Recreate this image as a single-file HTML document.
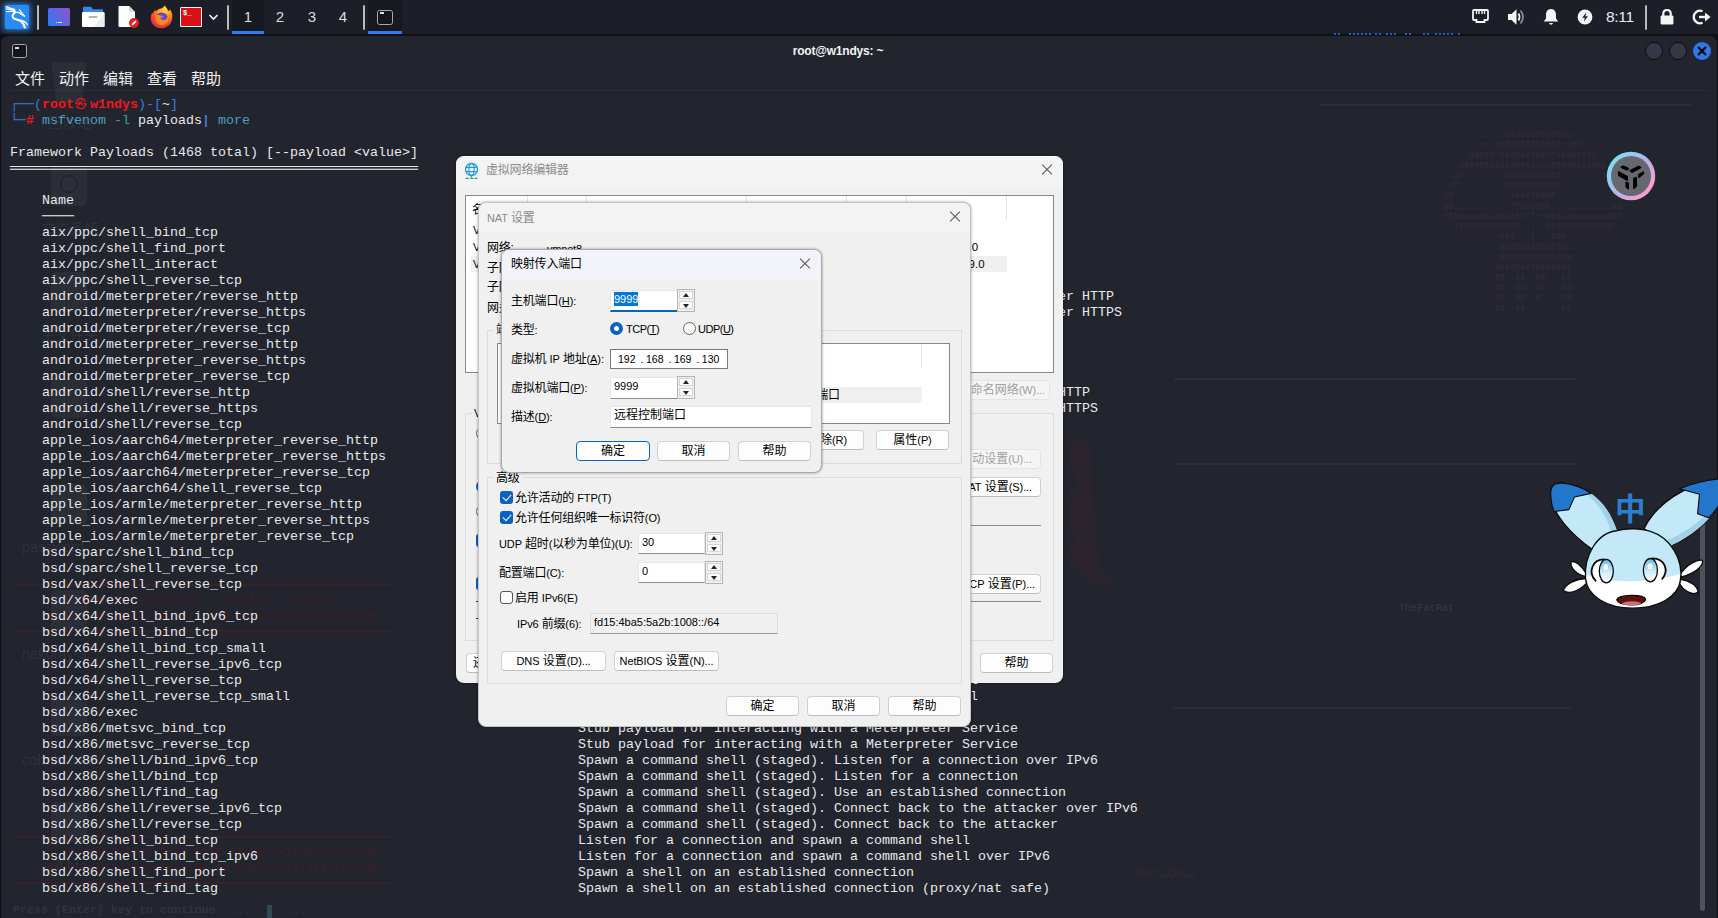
<!DOCTYPE html>
<html lang="zh-CN">
<head>
<meta charset="utf-8">
<title>root@w1ndys: ~</title>
<style>
*{box-sizing:border-box;margin:0;padding:0}
html,body{width:1718px;height:918px;overflow:hidden;background:#0f1014}
body{position:relative;font-family:"Liberation Sans","Noto Sans CJK SC",sans-serif;color:#e6e6e6}
.abs{position:absolute}
/* ---------- top panel ---------- */
#panel{position:absolute;left:0;top:0;width:1718px;height:34px;background:#1d1f28}
#panel .ws{position:absolute;top:0;height:34px;width:32px;text-align:center;font-size:15px;line-height:33px;color:#dcdcdc}
/* ---------- terminal ---------- */
#term{position:absolute;left:1px;top:36px;width:1716px;height:882px;background:#22242e;border-radius:7px 7px 0 0;overflow:hidden}
#ttitle{position:absolute;left:0;top:0;width:100%;height:30px}
#ttitle .t{position:absolute;left:0;width:1674px;top:0;text-align:center;font-size:12px;font-weight:bold;letter-spacing:-.2px;line-height:31px;color:#f4f4f4}
#menu{position:absolute;left:0;top:30px;width:100%;height:26px;font-size:15px;line-height:26px;color:#f2f2f2}
#menu span{position:absolute;top:0}
#out{position:absolute;left:9px;top:61px;font-family:"Liberation Mono","DejaVu Sans Mono",monospace;font-size:13.333px;line-height:16px;color:#e9e9ea;white-space:pre}
#out2{position:absolute;left:577px;top:61px;font-family:"Liberation Mono","DejaVu Sans Mono",monospace;font-size:13.333px;line-height:16px;color:#e9e9ea;white-space:pre}
.k{position:relative;top:-2px;display:inline-block;width:16px;text-align:center;text-indent:-3px;font-size:11.5px;font-weight:normal;font-family:"Noto Sans CJK SC",sans-serif;vertical-align:top}
.b{color:#3b7cde}.r{color:#f2161c;font-weight:bold}.c{color:#4c9fc4}
#art{position:absolute;left:0;top:0;width:100%;height:100%}
#art .ic{position:absolute;left:50px;width:36px;height:40px;border-radius:5px;background:rgba(255,255,255,.045)}
#art .ic i{position:absolute;left:9px;top:9px;width:18px;height:18px;border-radius:50%;border:1.5px solid rgba(0,0,0,.35)}
#art .il{position:absolute;left:21px;font-size:14.5px;line-height:16px;color:rgba(255,255,255,.075);white-space:nowrap}
#art .rl{position:absolute;height:2px;background:#37222a}
#art .rt{position:absolute;font-family:"Liberation Mono",monospace;font-weight:bold;font-size:11.667px;line-height:16px;color:#33222a;white-space:pre}
#art .sk{position:absolute;font-family:"Liberation Mono",monospace;font-weight:bold;font-size:8.5px;line-height:10.2px;color:#322935;white-space:pre}
/* ---------- win dialogs ---------- */
.dlg{position:absolute;background:#f0f0f0;border-radius:8px;color:#000;font-size:12px;overflow:hidden;box-shadow:0 0 3px rgba(0,0,0,.4)}
.dlg .tb{position:absolute;left:0;top:0;width:100%;background:#f3f3f3}
.btn{position:absolute;background:#fdfdfd;border:1px solid #d0d0d0;border-bottom-color:#bdbdbd;border-radius:4px;text-align:center;font-size:12px;color:#000;height:20px;line-height:18px;white-space:nowrap;overflow:hidden}
.lbl{position:absolute;white-space:nowrap;font-size:12px;line-height:14px;color:#000;letter-spacing:-.2px}
.l{font-size:11px;letter-spacing:-.1px}
.grp{position:absolute;border:1px solid #dcdcdc}
.inp{position:absolute;background:#fff;border:1px solid #e6e6e6;border-bottom:1px solid #8a8a8a;font-size:11px;line-height:16px;padding-left:3px;color:#000;white-space:nowrap}
.dt{font-weight:normal;margin:0 2.5px 0 5px}
.spin{position:absolute;width:18px;border:1px solid #b5b5b5;background:#f0f0f0}
.spin i{position:absolute;left:1px;width:14px;height:8px;background:#fdfdfd;border:1px solid #d5d5d5}
.spin i:before{content:"";position:absolute;left:3px;top:1px;border:3px solid transparent}
.spin i.u:before{border-bottom:4px solid #222;top:-2px}
.spin i.d:before{border-top:4px solid #222;top:2px}
.x{position:absolute;width:10px;height:10px}
.x:before,.x:after{content:"";position:absolute;left:-2px;top:4.5px;width:14px;height:1px;background:#555;transform:rotate(45deg)}
.x:after{transform:rotate(-45deg)}
.cb{position:absolute;width:13px;height:13px;border-radius:3px;background:#0a62c4}
.cb.off{background:#fdfdfd;border:1px solid #555}
.cb.on:after{content:"";position:absolute;left:3px;top:3px;width:7px;height:4px;border-left:1.4px solid #fff;border-bottom:1.4px solid #fff;transform:rotate(-47deg)}
.rd{position:absolute;width:13px;height:13px;border-radius:50%;border:1px solid #666;background:#fafafa}
.rd.on{border:4px solid #0a62c4;background:#fff}
</style>
</head>
<body>
<div id="panel">
  <!-- kali menu -->
  <div class="abs" style="left:5px;top:5px;width:24px;height:24px;background:#2a8af6;border-radius:2px;box-shadow:0 0 5px 2px rgba(42,138,246,.75)"></div>
  <svg class="abs" style="left:5px;top:5px" width="24" height="24" viewBox="0 0 24 24" fill="none" stroke="#fff" stroke-linecap="round" stroke-linejoin="round">
    <path d="M1 1.6 L9 4.6 M1.2 3.8 L9 5.4 M1.6 6.6 L9.2 6" stroke-width="1.3"/>
    <path d="M8.8 4.4 C10.4 6 9.6 7.6 8.4 9.2 C6.4 12 8.4 14 12 14.6 C16 15.2 18.6 17.4 19.8 22.6" stroke-width="2.1"/>
    <path d="M8.6 8.6 C10.6 6.8 13.6 7 16 8.8 L19.6 11.2" stroke-width="1.5"/>
    <path d="M14.4 4.6 L19 10.6" stroke-width="1.1"/>
    <path d="M14.5 15.2 C18 15.6 21 17 22.4 19.8" stroke-width="1.2"/>
  </svg>
  <div class="abs" style="left:37px;top:5px;width:2px;height:25px;background:#b9b9b9;border-radius:1px"></div>
  <!-- desktop -->
  <div class="abs" style="left:48px;top:8px;width:22px;height:17.5px;border-radius:1.5px;background:linear-gradient(50deg,#3578ee 15%,#6a62dc 60%,#9852cc 100%)"></div>
  <div class="abs" style="left:56px;top:21.5px;width:6px;height:1.6px;background:repeating-linear-gradient(90deg,#e8e8ff 0 1.5px,transparent 1.5px 2.2px)"></div>
  <!-- folder -->
  <svg class="abs" style="left:82px;top:6px" width="23" height="22" viewBox="0 0 23 22">
    <path d="M1 1.5 Q1 .8 1.8 .8 H9 L11 3.2 H20 Q21 3.2 21 4.2 V8 H1Z" fill="#3b82ec"/>
    <rect x="0" y="6" width="22.5" height="15" rx="1" fill="#fdfdfd"/>
    <path d="M22.5 7 V20 Q22.5 21 21.5 21 H12Z" fill="#ededed"/>
    <rect x="6.5" y="10" width="9" height="2" rx="1" fill="#b5b5b5"/>
  </svg>
  <!-- document -->
  <svg class="abs" style="left:117px;top:5px" width="24" height="24" viewBox="0 0 24 24">
    <path d="M1.5 1 H12 L18 7 V21 Q18 22 17 22 H2.5 Q1.5 22 1.5 21Z" fill="#fdfdfd"/>
    <path d="M12 1 L18 7 H13 Q12 7 12 6Z" fill="#d9d9d9"/>
    <circle cx="17" cy="18" r="5" fill="#e02326"/>
    <path d="M14.6 20.4 L15 18.8 L18.3 15.5 L19.5 16.7 L16.2 20Z" fill="#fff"/>
  </svg>
  <!-- firefox -->
  <svg class="abs" style="left:149px;top:5px" width="25" height="25" viewBox="0 0 25 25">
    <defs>
      <radialGradient id="ffo" cx="65%" cy="15%" r="95%"><stop offset="0" stop-color="#ffde3a"/><stop offset=".35" stop-color="#ff9a1f"/><stop offset=".7" stop-color="#f8432e"/><stop offset="1" stop-color="#d6205f"/></radialGradient>
      <radialGradient id="ffb" cx="50%" cy="40%" r="60%"><stop offset="0" stop-color="#8a5cf0"/><stop offset="1" stop-color="#4a2bb0"/></radialGradient>
    </defs>
    <path d="M12.5 3.5 C14 2.5 15 1.8 15.6 .6 C17.5 2.6 18.6 4.4 19.2 6 C20.4 5.6 20.8 4.8 21 4.2 C23 7 23.6 10 23.3 13 C22.7 19 18 23.3 12.3 23.3 C6.2 23.3 1.7 18.6 1.7 13 C1.7 10.4 2.4 8.6 3.4 7.2 C3.5 8 3.7 8.6 4.1 9.2 C4.3 7.6 5 6 6.4 4.8 C6.3 5.6 6.5 6.2 6.8 6.6 C8 4.8 10 3.8 12.5 3.5Z" fill="url(#ffo)"/>
    <circle cx="12.6" cy="13.6" r="6" fill="url(#ffb)"/>
    <path d="M6.8 10.2 C8.4 9.4 10.2 9.6 11.2 10.8 C12.4 10.6 13.4 11 13.6 11.6 C13 12.4 11.8 12.8 11 12.8 C11.4 14 12.6 15.4 14.8 15.2 C17.2 15 18.4 13 18.2 10.8 C19.8 13 19.6 16.4 17.4 18.4 C14.6 21 10 20.6 7.6 17.8 C5.8 15.6 5.6 12.4 6.8 10.2Z" fill="#ff8a1c"/>
  </svg>
  <!-- red terminal -->
  <div class="abs" style="left:180px;top:7px;width:22px;height:20px;background:#d81117;border:1px solid #f7f7f7;border-radius:1px"></div>
  <div class="abs" style="left:183px;top:9px;font:bold 7px/8px 'Liberation Mono',monospace;color:#fff">$_</div>
  <svg class="abs" style="left:208px;top:13px" width="11" height="8" viewBox="0 0 11 8"><path d="M1.5 2 L5.5 6 L9.5 2" fill="none" stroke="#f2f2f2" stroke-width="1.6"/></svg>
  <div class="abs" style="left:227px;top:5px;width:2px;height:25px;background:#b9b9b9;border-radius:1px"></div>
  <!-- workspaces -->
  <div class="abs" style="left:232px;top:0;width:32px;height:34px;background:#171920"></div>
  <div class="abs" style="left:232px;top:31px;width:32px;height:2.5px;background:#2d7bf0"></div>
  <div class="ws" style="left:232px">1</div><div class="ws" style="left:264px">2</div><div class="ws" style="left:296px">3</div><div class="ws" style="left:327px">4</div>
  <div class="abs" style="left:363px;top:5px;width:2px;height:25px;background:#b9b9b9;border-radius:1px"></div>
  <div class="abs" style="left:368px;top:0;width:34px;height:34px;background:#171920"></div>
  <div class="abs" style="left:368px;top:31px;width:34px;height:2.5px;background:#2d7bf0"></div>
  <div class="abs" style="left:377px;top:9.5px;width:16px;height:15px;background:#15161a;border:1.5px solid #a9a9a9;border-radius:2.5px"></div>
  <div class="abs" style="left:380px;top:12px;width:4px;height:2px;background:#ddd"></div>
<div class="abs" style="left:1334px;top:32.5px;width:2px;height:2px;border-radius:1px;background:#2d7bf0"></div><div class="abs" style="left:1338px;top:32.5px;width:2px;height:2px;border-radius:1px;background:#2d7bf0"></div><div class="abs" style="left:1349px;top:32.5px;width:2px;height:2px;border-radius:1px;background:#2d7bf0"></div><div class="abs" style="left:1353px;top:32.5px;width:2px;height:2px;border-radius:1px;background:#2d7bf0"></div><div class="abs" style="left:1357px;top:32.5px;width:2px;height:2px;border-radius:1px;background:#2d7bf0"></div><div class="abs" style="left:1361px;top:32.5px;width:2px;height:2px;border-radius:1px;background:#2d7bf0"></div><div class="abs" style="left:1365px;top:32.5px;width:2px;height:2px;border-radius:1px;background:#2d7bf0"></div><div class="abs" style="left:1369px;top:32.5px;width:2px;height:2px;border-radius:1px;background:#2d7bf0"></div><div class="abs" style="left:1375px;top:32.5px;width:2px;height:2px;border-radius:1px;background:#2d7bf0"></div><div class="abs" style="left:1379px;top:32.5px;width:2px;height:2px;border-radius:1px;background:#2d7bf0"></div><div class="abs" style="left:1386px;top:32.5px;width:2px;height:2px;border-radius:1px;background:#2d7bf0"></div><div class="abs" style="left:1390px;top:32.5px;width:2px;height:2px;border-radius:1px;background:#2d7bf0"></div><div class="abs" style="left:1394px;top:32.5px;width:2px;height:2px;border-radius:1px;background:#2d7bf0"></div><div class="abs" style="left:1405px;top:32.5px;width:2px;height:2px;border-radius:1px;background:#2d7bf0"></div><div class="abs" style="left:1409px;top:32.5px;width:2px;height:2px;border-radius:1px;background:#2d7bf0"></div><div class="abs" style="left:1423px;top:32.5px;width:2px;height:2px;border-radius:1px;background:#2d7bf0"></div><div class="abs" style="left:1427px;top:32.5px;width:2px;height:2px;border-radius:1px;background:#2d7bf0"></div><div class="abs" style="left:1435px;top:32.5px;width:2px;height:2px;border-radius:1px;background:#2d7bf0"></div><div class="abs" style="left:1439px;top:32.5px;width:2px;height:2px;border-radius:1px;background:#2d7bf0"></div><div class="abs" style="left:1443px;top:32.5px;width:2px;height:2px;border-radius:1px;background:#2d7bf0"></div><div class="abs" style="left:1447px;top:32.5px;width:2px;height:2px;border-radius:1px;background:#2d7bf0"></div><div class="abs" style="left:1451px;top:32.5px;width:2px;height:2px;border-radius:1px;background:#2d7bf0"></div><div class="abs" style="left:1458px;top:32.5px;width:2px;height:2px;border-radius:1px;background:#2d7bf0"></div>
  <!-- tray -->
  <svg class="abs" style="left:1472px;top:9px" width="17" height="15" viewBox="0 0 17 15">
    <path d="M2 1 H15 Q16 1 16 2 V10 Q16 11 15 11 H12.5 V13 H4.5 V11 H2 Q1 11 1 10 V2 Q1 1 2 1Z" fill="none" stroke="#f2f2f2" stroke-width="1.8"/>
    <path d="M4.5 2 V5 M7 2 V5 M10 2 V5 M12.5 2 V5" stroke="#f2f2f2" stroke-width="1.4"/>
  </svg>
  <svg class="abs" style="left:1507px;top:8px" width="19" height="18" viewBox="0 0 19 18">
    <path d="M1 6 H4.5 L9.5 1.2 V16.8 L4.5 12 H1Z" fill="#f5f5f5"/>
    <path d="M11.5 5.5 Q13.6 9 11.5 12.5" fill="none" stroke="#f5f5f5" stroke-width="1.7"/>
    <path d="M13.5 2.5 Q18.5 9 13.5 15.5" fill="none" stroke="#8c8c92" stroke-width="1.7"/>
  </svg>
  <svg class="abs" style="left:1542px;top:8px" width="18" height="18" viewBox="0 0 18 18">
    <path d="M9 1 C5.4 1 4 4 4 7 V10.5 L1.8 13.5 H16.2 L14 10.5 V7 C14 4 12.6 1 9 1Z" fill="#f5f5f5"/>
    <path d="M7 15 H11 Q10.6 16.8 9 16.8 Q7.4 16.8 7 15Z" fill="#f5f5f5"/>
  </svg>
  <svg class="abs" style="left:1577px;top:9px" width="16" height="16" viewBox="0 0 16 16">
    <circle cx="8" cy="8" r="7.4" fill="#f5f5f5"/>
    <path d="M9.4 3.2 L5.2 8.8 H7.8 L6.8 12.8 L10.9 7.2 H8.3Z" fill="#1d1f28"/>
  </svg>
  <div class="abs" style="left:1606px;top:0;font-size:15.5px;line-height:34px;color:#ececec;letter-spacing:-.3px">8:11</div>
  <div class="abs" style="left:1645px;top:5px;width:2px;height:25px;background:#b9b9b9;border-radius:1px"></div>
  <svg class="abs" style="left:1659px;top:8px" width="16" height="18" viewBox="0 0 16 18">
    <path d="M4.3 8 V5.6 Q4.3 2 8 2 Q11.7 2 11.7 5.6 V8" fill="none" stroke="#f5f5f5" stroke-width="2.2"/>
    <rect x="1.6" y="7.6" width="12.8" height="9" rx="1" fill="#f5f5f5"/>
  </svg>
  <svg class="abs" style="left:1692px;top:8px" width="20" height="18" viewBox="0 0 20 18">
    <path d="M10.5 3.2 A6.3 6.3 0 1 0 10.5 14.8" fill="none" stroke="#f5f5f5" stroke-width="2.3"/>
    <path d="M7 9 H15" stroke="#f5f5f5" stroke-width="2.4"/>
    <path d="M13 4.6 L18.6 9 L13 13.4Z" fill="#f5f5f5"/>
  </svg>
</div>
<div id="term">
  <div id="ttitle"><div class="t">root@w1ndys: ~</div>
    <div class="abs" style="left:11px;top:8px;width:15px;height:14px;background:#15161a;border:1.5px solid #a9a9a9;border-radius:2.5px"></div>
    <div class="abs" style="left:14px;top:11px;width:4px;height:2px;background:#ddd"></div>
    <div class="abs" style="left:1644px;top:6px;width:18px;height:18px;border-radius:50%;background:#353846;border:1px solid #0b0c10"></div>
    <div class="abs" style="left:1668px;top:6px;width:18px;height:18px;border-radius:50%;background:#353846;border:1px solid #0b0c10"></div>
    <div class="abs" style="left:1692px;top:6px;width:18px;height:18px;border-radius:50%;background:#2f78ea"></div>
    <svg class="abs" style="left:1692px;top:6px" width="18" height="18" viewBox="0 0 18 18"><path d="M5.6 5.6 L12.4 12.4 M12.4 5.6 L5.6 12.4" stroke="#0d0f14" stroke-width="2.2" stroke-linecap="round"/></svg>
  </div>
  <div id="menu"><span style="left:14px">文件</span><span style="left:58px">动作</span><span style="left:102px">编辑</span><span style="left:146px">查看</span><span style="left:190px">帮助</span></div>
  <div id="art">
    <div class="abs" style="left:8px;top:54px;width:1700px;height:1px;background:#2a2c36"></div>
    <!-- faint desktop icons seen through the translucent terminal -->
    <div class="ic" style="top:26px;height:40px;border-radius:3px;clip-path:polygon(0 0,100% 0,86% 100%,14% 100%)"></div><div class="il" style="top:79px;left:47px">回收站</div>
    <div class="ic" style="top:130px"><i></i></div><div class="il" style="top:185px;left:40px">文件系统</div>
    <div class="ic" style="top:236px"></div><div class="il" style="top:291px;left:40px">主文件夹</div>
    <div class="ic" style="top:342px"></div>
    <div class="ic" style="top:448px"></div><div class="il" style="top:503px">password</div>
    <div class="ic" style="top:554px"></div><div class="il" style="top:610px">nekoray-3...</div>
    <div class="ic" style="top:660px"></div><div class="il" style="top:716px">cobaltstrike</div>
    <div class="ic" style="top:766px"></div><div class="il" style="top:822px;left:40px">evil.hta</div>
    <!-- faint wallpaper banner -->
    <div class="rl" style="left:13px;top:548px;width:378px"></div>
    <div class="rt" style="left:65px;top:556px">! WARNING ! WARNING ! WARNING ! WARNING !</div>
    <div class="rt" style="left:39px;top:572px">YOU CAN UPLOAD THIS FILE TO WWW.NODISTRIBUTE.COM</div>
    <div class="rl" style="left:13px;top:594px;width:378px"></div>
    <div class="rl" style="left:13px;top:800px;width:378px"></div>
    <div class="rt" style="left:60px;top:808px">DO NOT UPLOAD THIS FILE TO WWW.VIRUSTOTAL.COM</div>
    <div class="rt" style="left:39px;top:824px">YOU CAN UPLOAD THIS FILE TO WWW.NODISTRIBUTE.COM</div>
    <div class="rl" style="left:13px;top:846px;width:378px"></div>
    <div class="rt" style="left:12px;top:866px;color:#2c3640">Press [Enter] key to continue ..............</div>
    <div class="abs" style="left:266px;top:869px;width:5px;height:13px;background:#2f4a57"></div>
    <div class="rt" style="left:1133px;top:829px;font-family:'Liberation Sans',sans-serif;font-size:13px;color:#2d2730">PAYLOAD</div>
    <div class="rl" style="left:1173px;top:342px;width:401px;background:#27313a"></div>
    <div class="rl" style="left:1173px;top:427px;width:401px;background:#27313a"></div>
    <div class="rl" style="left:1172px;top:671px;width:398px;background:#27313a"></div>
    <div class="rl" style="left:1318px;top:68px;width:372px;background:#27313a"></div>
<div class="rt" style="left:1398px;top:565px;font-size:10.2px;color:#2b3640">TheFatRat</div>
    <svg class="abs" style="left:1059px;top:380px" width="70" height="190" viewBox="0 0 70 190"><path d="M6 24 L30 24 L32 76 L40 152 L53 167 L37 170 L6 140 L15 125 L6 82 L18 70Z" fill="#2c242c"/></svg>
    <pre class="sk" style="left:1366px;top:84px">                          ..:::::::::..
                      ..:::aad8888888baa:::..
                  .::::d:?88888888888?::8b::::.
                .:::d8888:?88888888??a888888b:::.
              .:::d8888888a8888888aa8888888888b:::.
             ::::dP::::::::88888888888::::::::Yb::::
            ::::dP:::::::::Y888888888P:::::::::Yb::::
           ::::d8:::::::::::Y8888888P:::::::::::8b::::
          .::::88::::::::::::Y88888P::::::::::::88::::.
          :::::Y8baaaaaaaaaa88P:T:Y88aaaaaaaaaad8P:::::
          :::::::Y88888888888P::|::Y88888888888P:::::::
          ::::::::::::::::888:::|:::888::::::::::::::::
          `:::::::::::::::8888888888888b::::::::::::::'
           :::::::::::::::88888888888888::::::::::::::
            :::::::::::::d88888888888888:::::::::::::
             ::::::::::::88::88::88:::88::::::::::::
              `::::::::::88::88::88:::88::::::::::'
                `::::::::88::88::P::::88::::::::'
                  `::::::88::88:::::::88::::::'
                     ``:::::::::::::::::::''
                          ``:::::::::''</pre>
  </div>
  <div id="out"><span class="b">┌──(</span><span class="r">root<span class="k">㉿</span>w1ndys</span><span class="b">)-[</span><span class="w">~</span><span class="b">]</span>
<span class="b">└─</span><span class="r">#</span> <span class="c">msfvenom</span> <span style="color:#3aa58c">-l</span> payloads<span class="b" style="font-weight:bold">|</span> <span class="c">more</span>

Framework Payloads (1468 total) [--payload &lt;value&gt;]
═══════════════════════════════════════════════════

    Name
    ────
    aix/ppc/shell_bind_tcp
    aix/ppc/shell_find_port
    aix/ppc/shell_interact
    aix/ppc/shell_reverse_tcp
    android/meterpreter/reverse_http
    android/meterpreter/reverse_https
    android/meterpreter/reverse_tcp
    android/meterpreter_reverse_http
    android/meterpreter_reverse_https
    android/meterpreter_reverse_tcp
    android/shell/reverse_http
    android/shell/reverse_https
    android/shell/reverse_tcp
    apple_ios/aarch64/meterpreter_reverse_http
    apple_ios/aarch64/meterpreter_reverse_https
    apple_ios/aarch64/meterpreter_reverse_tcp
    apple_ios/aarch64/shell_reverse_tcp
    apple_ios/armle/meterpreter_reverse_http
    apple_ios/armle/meterpreter_reverse_https
    apple_ios/armle/meterpreter_reverse_tcp
    bsd/sparc/shell_bind_tcp
    bsd/sparc/shell_reverse_tcp
    bsd/vax/shell_reverse_tcp
    bsd/x64/exec
    bsd/x64/shell_bind_ipv6_tcp
    bsd/x64/shell_bind_tcp
    bsd/x64/shell_bind_tcp_small
    bsd/x64/shell_reverse_ipv6_tcp
    bsd/x64/shell_reverse_tcp
    bsd/x64/shell_reverse_tcp_small
    bsd/x86/exec
    bsd/x86/metsvc_bind_tcp
    bsd/x86/metsvc_reverse_tcp
    bsd/x86/shell/bind_ipv6_tcp
    bsd/x86/shell/bind_tcp
    bsd/x86/shell/find_tag
    bsd/x86/shell/reverse_ipv6_tcp
    bsd/x86/shell/reverse_tcp
    bsd/x86/shell_bind_tcp
    bsd/x86/shell_bind_tcp_ipv6
    bsd/x86/shell_find_port
    bsd/x86/shell_find_tag</div>
  <div id="out2">







Listen for a connection and spawn a command shell
Spawn a shell on an established connection
Simply execve /bin/sh (for inetd programs)
Connect back to attacker and spawn a command shell
Run a meterpreter server in Android. Tunnel communication over HTTP
Run a meterpreter server in Android. Tunnel communication over HTTPS
Run a meterpreter server in Android. Connect back stager
Connect back to attacker and spawn a Meterpreter shell
Connect back to attacker and spawn a Meterpreter shell
Connect back to the attacker and spawn a Meterpreter shell
Spawn a piped command shell (sh). Tunnel communication over HTTP
Spawn a piped command shell (sh). Tunnel communication over HTTPS
Spawn a piped command shell (sh). Connect back stager
Run the Meterpreter / Mettle server payload (stageless)
Run the Meterpreter / Mettle server payload (stageless)
Run the Meterpreter / Mettle server payload (stageless)
Connect back to attacker and spawn a command shell
Run the Meterpreter / Mettle server payload (stageless)
Run the Meterpreter / Mettle server payload (stageless)
Run the Meterpreter / Mettle server payload (stageless)
Listen for a connection and spawn a command shell
Connect back to attacker and spawn a command shell
Connect back to attacker and spawn a command shell
Execute an arbitrary command
Listen for a connection and spawn a command shell over IPv6
Bind an arbitrary command to an arbitrary port
Listen for a connection and spawn a command shell
Connect back to attacker and spawn a command shell over IPv6
Connect back to attacker and spawn a command shell
Connect back to attacker and spawn a command shell
Execute an arbitrary command
Stub payload for interacting with a Meterpreter Service
Stub payload for interacting with a Meterpreter Service
Spawn a command shell (staged). Listen for a connection over IPv6
Spawn a command shell (staged). Listen for a connection
Spawn a command shell (staged). Use an established connection
Spawn a command shell (staged). Connect back to the attacker over IPv6
Spawn a command shell (staged). Connect back to the attacker
Listen for a connection and spawn a command shell
Listen for a connection and spawn a command shell over IPv6
Spawn a shell on an established connection
Spawn a shell on an established connection (proxy/nat safe)</div>
</div>

<!-- ================= 虚拟网络编辑器 ================= -->
<div class="dlg" id="d1" style="left:456px;top:156px;width:607px;height:527px;border-top:1px solid #fdfdfd">
  <div class="tb" style="height:30px"></div>
  <svg class="abs" style="left:8px;top:5px" width="15" height="18" viewBox="0 0 15 18">
    <circle cx="7.5" cy="7.5" r="6" fill="none" stroke="#1e9be0" stroke-width="1.3"/>
    <ellipse cx="7.5" cy="7.5" rx="2.6" ry="6" fill="none" stroke="#1e9be0" stroke-width="1.1"/>
    <path d="M1.8 5.4 H13.2 M1.8 9.6 H13.2" stroke="#1e9be0" stroke-width="1.1"/>
    <path d="M7.5 13.5 V15.6" stroke="#19a86e" stroke-width="1.2"/>
    <path d="M1.5 16.3 H13.5" stroke="#19a86e" stroke-width="1.2" stroke-dasharray="3.4 1.2"/>
  </svg>
  <div class="lbl" style="left:30px;top:5px;color:#8b8b8b;line-height:16px">虚拟网络编辑器</div>
  <div class="x" style="left:586px;top:7px"></div>
  <!-- list view -->
  <div class="abs" style="left:9px;top:38px;width:589px;height:178px;background:#fff;border:1px solid #828790"></div>
  <div class="abs" style="left:71px;top:39px;width:1px;height:24px;background:#e5e5e5"></div>
  <div class="abs" style="left:130px;top:39px;width:1px;height:24px;background:#e5e5e5"></div>
  <div class="abs" style="left:290px;top:39px;width:1px;height:24px;background:#e5e5e5"></div>
  <div class="abs" style="left:390px;top:39px;width:1px;height:24px;background:#e5e5e5"></div>
  <div class="abs" style="left:450px;top:39px;width:1px;height:24px;background:#e5e5e5"></div>
  <div class="abs" style="left:550px;top:39px;width:1px;height:24px;background:#e5e5e5"></div>
  <div class="abs" style="left:15px;top:99px;width:536px;height:16px;background:#f0f0f0"></div>
  <div class="lbl" style="left:16px;top:46px">名称</div>
  <div class="lbl" style="left:76px;top:46px">类型</div>
  <div class="lbl" style="left:135px;top:46px">外部连接</div>
  <div class="lbl" style="left:295px;top:46px">主机连接</div>
  <div class="lbl" style="left:395px;top:46px"><span class="l">DHCP</span></div>
  <div class="lbl" style="left:455px;top:46px">子网地址</div>
  <div class="lbl" style="left:17px;top:66px"><span class="l">VMnet0</span></div><div class="lbl" style="left:76px;top:66px">桥接模式</div><div class="lbl" style="left:135px;top:66px">自动桥接</div><div class="lbl" style="left:295px;top:66px"><span class="l">-</span></div><div class="lbl" style="left:395px;top:66px"><span class="l">-</span></div><div class="lbl" style="left:455px;top:66px"><span class="l">-</span></div>
  <div class="lbl" style="left:17px;top:83px"><span class="l">VMnet1</span></div><div class="lbl" style="left:76px;top:83px">仅主机<span class="l">...</span></div><div class="lbl" style="left:135px;top:83px"><span class="l">-</span></div><div class="lbl" style="left:295px;top:83px">已连接</div><div class="lbl" style="left:395px;top:83px">已启用</div><div class="lbl" style="left:455px;top:83px"><span class="l" style="font-size:11.5px;letter-spacing:0">192.168.80.0</span></div>
  <div class="lbl" style="left:17px;top:100px"><span class="l">VMnet8</span></div><div class="lbl" style="left:76px;top:100px"><span class="l">NAT</span> 模式</div><div class="lbl" style="left:135px;top:100px"><span class="l">NAT</span> 模式</div><div class="lbl" style="left:295px;top:100px">已连接</div><div class="lbl" style="left:395px;top:100px">已启用</div><div class="lbl" style="left:455px;top:100px"><span class="l" style="font-size:11.5px;letter-spacing:0">192.168.169.0</span></div>
  <div class="btn" style="left:340px;top:223px;width:78px">添加网络<span class="l">(E)...</span></div>
  <div class="btn" style="left:426px;top:223px;width:78px;color:#a0a0a0;background:#f5f5f5;border-color:#e4e4e4">移除网络<span class="l">(O)</span></div>
  <div class="btn" style="left:494px;top:223px;width:100px;color:#a0a0a0;background:#f5f5f5;border-color:#e4e4e4;text-align:right;padding-right:4px">重命名网络<span class="l">(W)...</span></div>
  <!-- VMnet info group -->
  <div class="grp" style="left:9px;top:256px;width:589px;height:228px"></div>
  <div class="lbl" style="left:16px;top:249px;background:#f0f0f0;padding:0 2px"><span class="l">VMnet</span> 信息</div>
  <div class="rd" style="left:20px;top:270px"></div><div class="lbl" style="left:38px;top:270px">桥接模式<span class="l">(</span>将虚拟机直接连接到外部网络<span class="l">)(B)</span></div>
  <div class="rd on" style="left:20px;top:323px"></div><div class="lbl" style="left:38px;top:323px"><span class="l">NAT</span> 模式<span class="l">(</span>与虚拟机共享主机的 <span class="l">IP</span> 地址<span class="l">)(N)</span></div>
  <div class="rd" style="left:20px;top:348px"></div><div class="lbl" style="left:38px;top:348px">仅主机模式<span class="l">(</span>在专用网络内连接虚拟机<span class="l">)(H)</span></div>
  <div class="cb on" style="left:20px;top:377px"></div><div class="lbl" style="left:38px;top:377px">将主机虚拟适配器连接到此网络<span class="l">(V)</span></div>
  <div class="cb on" style="left:20px;top:420px"></div><div class="lbl" style="left:38px;top:420px">使用本地 <span class="l">DHCP</span> 服务将 <span class="l">IP</span> 地址分配给虚拟机<span class="l">(D)</span></div>
  <div class="abs" style="left:20px;top:444px;width:5px;height:1px;background:#333"></div>
  <div class="abs" style="left:20px;top:461px;width:5px;height:1px;background:#333"></div>
  <div class="btn" style="left:490px;top:292px;width:95px;color:#a0a0a0;background:#f5f5f5;border-color:#e4e4e4;text-align:right;padding-right:8px">自动设置<span class="l">(U)...</span></div>
  <div class="btn" style="left:490px;top:320px;width:95px;text-align:right;padding-right:8px"><span class="l">NAT</span> 设置<span class="l">(S)...</span></div>
  <div class="abs" style="left:420px;top:368px;width:165px;height:1px;background:#8a8a8a"></div>
  <div class="btn" style="left:490px;top:417px;width:95px;text-align:right;padding-right:5px"><span class="l">DHCP</span> 设置<span class="l">(P)...</span></div>
  <div class="abs" style="left:420px;top:444px;width:165px;height:1px;background:#8a8a8a"></div>
  <div class="btn" style="left:10px;top:496px;width:88px;text-align:left;padding-left:6px">还原默认设置<span class="l">(R)</span></div>
  <div class="btn" style="left:524px;top:496px;width:73px">帮助</div>
</div>
<!-- ================= NAT 设置 ================= -->
<div class="dlg" id="d2" style="left:478px;top:202px;width:493px;height:525px;border:1px solid #c4c4c4">
  <div class="tb" style="height:29px"></div>
  <div class="lbl" style="left:8px;top:7px;color:#8b8b8b;line-height:16px"><span class="l">NAT</span> 设置</div>
  <div class="x" style="left:471px;top:8px"></div>
  <div class="lbl" style="left:8px;top:38px">网络:</div><div class="lbl" style="left:68px;top:39px;font-size:11px">vmnet8</div>
  <div class="lbl" style="left:8px;top:58px">子网 IP:</div><div class="lbl" style="left:68px;top:59px;font-size:11px">192.168.169.0</div>
  <div class="lbl" style="left:8px;top:77px">子网掩码:</div><div class="lbl" style="left:68px;top:78px;font-size:11px">255.255.255.0</div>
  <div class="lbl" style="left:8px;top:98px">网关 <span class="l">IP(G):</span></div>
  <div class="grp" style="left:8px;top:127px;width:475px;height:134px"></div>
  <div class="lbl" style="left:15px;top:120px;background:#f0f0f0;padding:0 2px">端口转发<span class="l">(F)</span></div>
  <div class="abs" style="left:18px;top:140px;width:453px;height:81px;background:#fff;border:1px solid #828790"></div>
  <div class="abs" style="left:442px;top:141px;width:1px;height:24px;background:#e5e5e5"></div>
  <div class="abs" style="left:24px;top:184px;width:419px;height:16px;background:#f0f0f0"></div>
  <div class="lbl" style="left:24px;top:146px">主机端口</div><div class="lbl" style="left:90px;top:146px">类型</div><div class="lbl" style="left:140px;top:146px">虚拟机 <span class="l">IP</span> 地址</div><div class="lbl" style="left:290px;top:146px">描述</div>
  <div class="lbl" style="left:24px;top:185px"><span class="l">9999</span></div><div class="lbl" style="left:90px;top:185px"><span class="l">TCP</span></div><div class="lbl" style="left:140px;top:185px"><span class="l">192.168.169.130:9999</span></div><div class="lbl" style="left:290px;top:185px">远程控制端口</div>
  <div class="btn" style="left:229px;top:227px;width:73px">添加<span class="l">(A)...</span></div>
  <div class="btn" style="left:312px;top:227px;width:73px">移除<span class="l">(R)</span></div>
  <div class="btn" style="left:397px;top:227px;width:73px">属性<span class="l">(P)</span></div>
  <div class="grp" style="left:8px;top:274px;width:475px;height:207px"></div>
  <div class="lbl" style="left:15px;top:268px;background:#f0f0f0;padding:0 2px">高级</div>
  <div class="cb on" style="left:21px;top:288px"></div><div class="lbl" style="left:36px;top:288px">允许活动的 <span class="l">FTP(T)</span></div>
  <div class="cb on" style="left:21px;top:308px"></div><div class="lbl" style="left:36px;top:308px">允许任何组织唯一标识符<span class="l">(O)</span></div>
  <div class="lbl" style="left:20px;top:334px"><span class="l">UDP</span> 超时<span class="l">(</span>以秒为单位<span class="l">)(U):</span></div>
  <div class="inp" style="left:159px;top:330px;width:67px;height:21px">30</div>
  <div class="spin" style="left:226px;top:329px;height:23px"><i class="u" style="top:1px"></i><i class="d" style="top:11px"></i></div>
  <div class="lbl" style="left:20px;top:363px">配置端口<span class="l">(C):</span></div>
  <div class="inp" style="left:159px;top:359px;width:67px;height:21px">0</div>
  <div class="spin" style="left:226px;top:358px;height:23px"><i class="u" style="top:1px"></i><i class="d" style="top:11px"></i></div>
  <div class="cb off" style="left:21px;top:388px"></div><div class="lbl" style="left:36px;top:388px">启用 <span class="l">IPv6(E)</span></div>
  <div class="lbl" style="left:38px;top:414px"><span class="l">IPv6</span> 前缀<span class="l">(6):</span></div>
  <div class="inp" style="left:111px;top:410px;width:188px;height:21px;background:#f0f0f0;border-color:#dcdcdc #dcdcdc #9a9a9a;padding-left:3px">fd15:4ba5:5a2b:1008::/64</div>
  <div class="btn" style="left:22px;top:448px;width:105px"><span class="l">DNS</span> 设置<span class="l">(D)...</span></div>
  <div class="btn" style="left:135px;top:448px;width:105px"><span class="l">NetBIOS</span> 设置<span class="l">(N)...</span></div>
  <div class="btn" style="left:247px;top:493px;width:73px">确定</div>
  <div class="btn" style="left:328px;top:493px;width:73px">取消</div>
  <div class="btn" style="left:409px;top:493px;width:73px">帮助</div>
</div>
<!-- ================= 映射传入端口 ================= -->
<div class="dlg" id="d3" style="left:501px;top:249px;width:321px;height:224px;border:1px solid #a9a9a9">
  <div class="tb" style="height:30px;background:#f2f3f8"></div>
  <div class="lbl" style="left:9px;top:6px;line-height:16px">映射传入端口</div>
  <div class="x" style="left:298px;top:8px"></div>
  <div class="lbl" style="left:9px;top:44px">主机端口<span class="l">(<u>H</u>):</span></div>
  <div class="inp" style="left:108px;top:40px;width:68px;height:22px;border-bottom:2px solid #0067c0"><span style="background:#0078d7;color:#fff;padding:1px 0">9999</span></div>
  <div class="spin" style="left:175px;top:39px;height:23px"><i class="u" style="top:1px"></i><i class="d" style="top:11px"></i></div>
  <div class="lbl" style="left:9px;top:73px">类型<span class="l">:</span></div>
  <div class="rd on" style="left:108px;top:72px"></div><div class="lbl" style="left:124px;top:72px;font-size:11px;letter-spacing:-.5px">TCP(<u>T</u>)</div>
  <div class="rd" style="left:181px;top:72px"></div><div class="lbl" style="left:196px;top:72px;font-size:11px;letter-spacing:-.5px">UDP(<u>U</u>)</div>
  <div class="lbl" style="left:9px;top:102px">虚拟机 <span class="l">IP</span> 地址<span class="l">(<u>A</u>):</span></div>
  <div class="abs" style="left:108px;top:99px;width:118px;height:20px;background:#fff;border:1px solid #7a7a7a;font-size:10.5px;line-height:18px;padding-left:7px;white-space:pre;color:#000">192<b class="dt">.</b>168<b class="dt">.</b>169<b class="dt">.</b>130</div>
  <div class="lbl" style="left:9px;top:131px">虚拟机端口<span class="l">(<u>P</u>):</span></div>
  <div class="inp" style="left:108px;top:127px;width:68px;height:22px">9999</div>
  <div class="spin" style="left:175px;top:126px;height:23px"><i class="u" style="top:1px"></i><i class="d" style="top:11px"></i></div>
  <div class="lbl" style="left:9px;top:160px">描述<span class="l">(<u>D</u>):</span></div>
  <div class="inp" style="left:108px;top:156px;width:202px;height:22px;font-size:12px">远程控制端口</div>
  <div class="btn" style="left:74px;top:191px;width:74px;border:1px solid #0067c0">确定</div>
  <div class="btn" style="left:155px;top:191px;width:73px">取消</div>
  <div class="btn" style="left:236px;top:191px;width:73px">帮助</div>
</div>

<!-- scrollbar -->
<div class="abs" style="left:1700px;top:520px;width:5px;height:391px;border-radius:3px;background:#50525b"></div>
<!-- floating round icon -->
<svg class="abs" style="left:1600px;top:145px" width="62" height="62" viewBox="0 0 918 918">
  <defs><linearGradient id="rg" x1="0.12" y1="0.2" x2="0.88" y2="0.85"><stop offset="0" stop-color="#7fdcf0"/><stop offset=".5" stop-color="#b6b3ea"/><stop offset="1" stop-color="#ff9ccb"/></linearGradient></defs>
  <circle cx="459" cy="459" r="359" fill="url(#rg)"/>
  <circle cx="459" cy="459" r="296" fill="#67676f"/>
  <g fill="#000" stroke="#000" stroke-width="26" stroke-linejoin="round">
    <path d="M318 328 L345 316 L418 350 L398 366Z"/>
    <path d="M276 400 L403 470 L400 520 L280 448Z"/>
    <path d="M448 380 L572 318 L600 332 L478 398Z"/>
    <path d="M578 438 L640 402 L640 424 L578 474Z"/>
    <path d="M388 556 L416 568 L416 646 L390 618Z"/>
    <path d="M504 498 L536 484 L536 606 L504 640Z"/>
  </g>
</svg>
<!-- mascot -->
<svg class="abs" style="left:1530px;top:460px" width="188" height="170" viewBox="0 0 1015 918">
  <defs>
    <clipPath id="hd"><path d="M300 640 C290 520 360 392 470 382 C520 366 600 368 650 386 C760 420 830 540 812 650 C800 740 690 800 555 800 C420 800 310 740 300 640Z"/></clipPath>
    <linearGradient id="ey" x1="0" y1="0" x2="0" y2="1"><stop offset="0" stop-color="#6fb7e0"/><stop offset=".55" stop-color="#cdeefa"/><stop offset="1" stop-color="#ffffff"/></linearGradient>
  </defs>
  <!-- fins -->
  <g fill="#fff" stroke="#0a0a0a" stroke-width="7" stroke-linejoin="round">
    <path d="M305 615 C270 560 240 545 222 550 C215 580 250 620 305 630Z"/>
    <path d="M300 640 C250 640 190 670 180 705 C215 730 275 700 305 665Z"/>
    <path d="M812 615 C850 560 905 535 932 542 C935 580 880 615 815 632Z"/>
    <path d="M812 645 C860 650 905 680 908 715 C870 735 825 700 808 668Z"/>
  </g>
  <!-- ears -->
  <path d="M335 482 C220 400 120 290 112 195 C108 140 130 122 175 125 C300 130 420 230 472 388Z" fill="#c3e8f8" stroke="#0a0a0a" stroke-width="7" stroke-linejoin="round"/>
  <path d="M330 180 C400 230 445 300 472 388 L440 392 C420 320 380 250 318 196Z" fill="#a3d0ea"/>
  <path d="M112 195 C108 140 130 122 175 125 C230 128 285 150 330 180 L240 200 L210 268 L130 278 C118 250 113 220 112 195Z" fill="#2277cc" stroke="#0a0a0a" stroke-width="6" stroke-linejoin="round"/>
  <path d="M615 372 C680 240 830 130 1040 100 L1040 200 C1000 300 900 400 762 462Z" fill="#c3e8f8" stroke="#0a0a0a" stroke-width="7" stroke-linejoin="round"/>
  <path d="M735 435 C840 395 940 320 1005 225 L1040 200 C1000 300 900 400 762 462Z" fill="#a3d0ea"/>
  <path d="M808 155 C880 125 960 108 1040 100 L1040 200 C1020 250 995 285 965 312 L905 290 L915 185Z" fill="#2277cc" stroke="#0a0a0a" stroke-width="6" stroke-linejoin="round"/>
  <!-- head -->
  <path d="M300 640 C290 520 360 392 470 382 C520 366 600 368 650 386 C760 420 830 540 812 650 C800 740 690 800 555 800 C420 800 310 740 300 640Z" fill="#c3e8f8"/>
  <g clip-path="url(#hd)">
    <path d="M280 612 C360 640 450 655 560 655 C660 652 740 635 830 610 L830 820 L280 820Z" fill="#ffffff"/>
    <path d="M770 480 C815 540 820 640 790 720 L840 720 L840 460Z" fill="#a3d0ea" opacity=".7"/>
  </g>
  <path d="M300 640 C290 520 360 392 470 382 C520 366 600 368 650 386 C760 420 830 540 812 650 C800 740 690 800 555 800 C420 800 310 740 300 640Z" fill="none" stroke="#0a0a0a" stroke-width="7"/>
  <!-- eyes -->
  <path d="M398 536 C330 540 312 610 356 654 C372 668 420 668 440 640Z" fill="#fff"/>
  <path d="M400 537 C335 538 312 606 354 652" fill="none" stroke="#0a0a0a" stroke-width="10" stroke-linecap="round"/>
  <ellipse cx="412" cy="600" rx="38" ry="63" fill="url(#ey)" stroke="#0a0a0a" stroke-width="7"/>
  <ellipse cx="410" cy="578" rx="12" ry="16" fill="#fff"/>
  <path d="M662 530 C735 532 752 600 712 644 C695 660 650 660 625 636Z" fill="#fff"/>
  <path d="M660 531 C728 530 752 598 714 642" fill="none" stroke="#0a0a0a" stroke-width="10" stroke-linecap="round"/>
  <ellipse cx="650" cy="595" rx="38" ry="63" fill="url(#ey)" stroke="#0a0a0a" stroke-width="7"/>
  <ellipse cx="648" cy="574" rx="12" ry="16" fill="#fff"/>
  <!-- mouth -->
  <path d="M468 755 C480 725 610 722 625 752 C620 790 480 795 468 755Z" fill="#5c1010" stroke="#0a0a0a" stroke-width="6"/>
  <path d="M495 775 C520 758 580 758 602 774 C570 790 520 790 495 775Z" fill="#d96a72"/>
  <text x="541" y="322" text-anchor="middle" font-family="'Liberation Sans','Noto Sans CJK SC',sans-serif" font-weight="bold" font-size="165" fill="#2a7fd2">中</text>
</svg>
</body>
</html>
